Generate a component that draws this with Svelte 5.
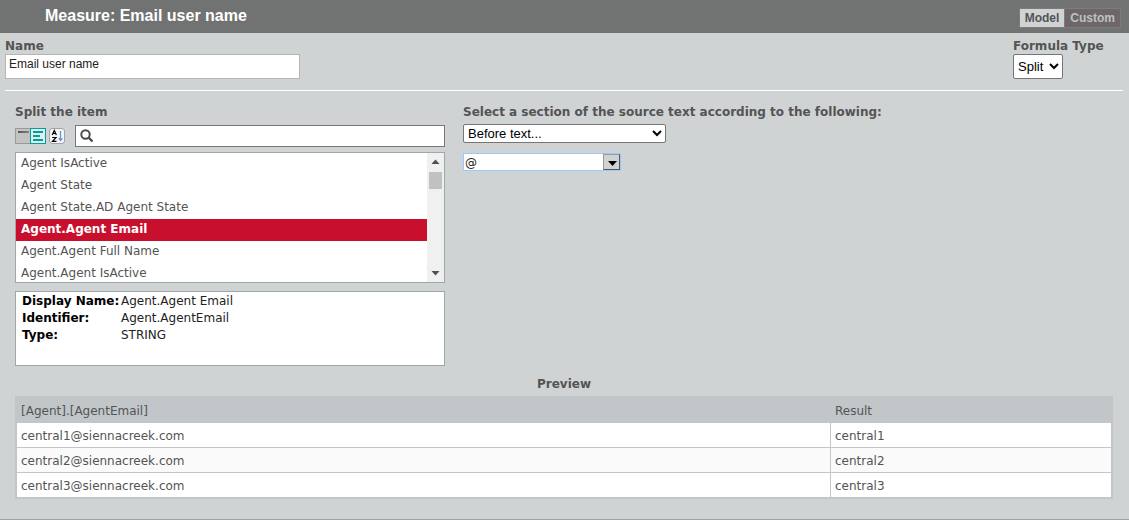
<script lang="ts">
	let mode = 'Model';
	let name = 'Email user name';
	let formulaType = 'Split';
	let search = '';
	let section = 'Before text...';
	let splitText = '@';
	let grouped = true;

	const items = [
		'Agent IsActive',
		'Agent State',
		'Agent State.AD Agent State',
		'Agent.Agent Email',
		'Agent.Agent Full Name',
		'Agent.Agent IsActive'
	];
	let selected = 'Agent.Agent Email';

	const emails = [
		'central1@siennacreek.com',
		'central2@siennacreek.com',
		'central3@siennacreek.com'
	];

	$: visible = items.filter((i) => i.toLowerCase().includes(search.toLowerCase()));

	function split(text: string, sep: string, how: string) {
		const at = text.indexOf(sep);
		if (!sep || at < 0) return text;
		return how === 'Before text...' ? text.slice(0, at) : text.slice(at + sep.length);
	}
</script>

<div class="page">
	<header>
		<h1>Measure: Email user name</h1>
		<div class="modes">
			{#each ['Model', 'Custom'] as m}
				<button class:active={mode === m} on:click={() => (mode = m)}>{m}</button>
			{/each}
		</div>
	</header>

	<div class="top">
		<div class="field">
			<label for="name">Name</label>
			<input id="name" class="name" type="text" bind:value={name} />
		</div>
		<div class="field type">
			<label for="type">Formula Type</label>
			<select id="type" bind:value={formulaType}>
				<option>Split</option>
				<option>Sum</option>
			</select>
		</div>
	</div>

	<main>
		<div class="columns">
			<section class="source">
				<h2>Split the item</h2>
				<div class="toolbar">
					<div class="views">
						<button aria-label="Flat view" class:on={!grouped} on:click={() => (grouped = false)}>
							<svg width="14" height="14" viewBox="0 0 14 14">
								<defs>
									<linearGradient id="bar">
										<stop offset="0" stop-color="#555" />
										<stop offset="1" stop-color="#808080" />
									</linearGradient>
								</defs>
								<rect x="2" y="2" width="11" height="2" fill="url(#bar)" />
							</svg>
						</button>
						<button aria-label="Grouped view" class:on={grouped} on:click={() => (grouped = true)}>
							<svg width="14" height="14" viewBox="0 0 14 14" fill="#00a19a">
								<rect x="2" y="2" width="10" height="2" />
								<rect x="2" y="6" width="7" height="2" />
								<rect x="2" y="10" width="10" height="2" />
							</svg>
						</button>
					</div>
					<button class="sort" aria-label="Sort A to Z">
						<svg width="16" height="16" viewBox="0 0 16 16" fill="none">
							<rect x="0.5" y="0.5" width="15" height="15" rx="2.5" fill="#f4f4f4" stroke="#a3a3a3" />
							<path d="M3.200 7 5.300 2.500 7.400 7M4 5.500h2.600" stroke="#000" stroke-width="1.200" />
							<path d="M3.200 9.500h3.800L3.500 13.300H7.500" stroke="#000" stroke-width="1.200" />
							<path d="M11.500 3v8" stroke="#5b8fe0" stroke-width="1.200" />
							<path d="M9 10.200h5l-2.500 3.300z" fill="#5b8fe0" />
						</svg>
					</button>
					<label class="search">
						<svg width="14" height="14" viewBox="0 0 14 14" fill="none" stroke="#4a4a4a">
							<circle cx="5.500" cy="5.500" r="4.200" stroke-width="2" />
							<path d="M8.500 8.500 12.500 12.500" stroke-width="2.400" />
						</svg>
						<input type="text" aria-label="Search" bind:value={search} />
					</label>
				</div>

				<div class="list">
					<ul>
						{#each visible as item}
							<li>
								<button class:selected={selected === item} on:click={() => (selected = item)}>{item}</button>
							</li>
						{/each}
					</ul>
					<div class="scroll">
						<svg width="9" height="5" viewBox="0 0 9 5"><path d="M0.500 5 4.500 0.500 8.500 5z" fill="#505050" /></svg>
						<div class="thumb"></div>
						<svg width="9" height="5" viewBox="0 0 9 5"><path d="M0.500 0 4.500 4.500 8.500 0z" fill="#505050" /></svg>
					</div>
				</div>

				<dl>
					<dt>Display Name:</dt>
					<dd>{selected}</dd>
					<dt>Identifier:</dt>
					<dd>{selected.replaceAll(' ', '')}</dd>
					<dt>Type:</dt>
					<dd>STRING</dd>
				</dl>
			</section>

			<section class="rule">
				<h2><label for="section">Select a section of the source text according to the following:</label></h2>
				<select id="section" bind:value={section}>
					<option>Before text...</option>
					<option>After text...</option>
				</select>
				<div class="combo">
					<input type="text" aria-label="Text" bind:value={splitText} />
					<button aria-label="Show suggestions">
						<svg width="9" height="5" viewBox="0 0 9 5"><path d="M0 0h9L4.500 5z" fill="#000" /></svg>
					</button>
				</div>
			</section>
		</div>

		<h2 class="preview">Preview</h2>
		<table>
			<thead>
				<tr>
					<th>[Agent].[AgentEmail]</th>
					<th class="result">Result</th>
				</tr>
			</thead>
			<tbody>
				{#each emails as email}
					<tr>
						<td>{email}</td>
						<td>{split(email, splitText, section)}</td>
					</tr>
				{/each}
			</tbody>
		</table>
	</main>
</div>

<style>
	:global(body) {
		margin: 0;
		background: #cfd3d4;
	}

	.page {
		box-sizing: border-box;
		min-height: 100vh;
		border-bottom: 1px solid #9ea4a6;
		font: 12px/16px "DejaVu Sans", sans-serif;
		color: #545454;
	}

	.page :is(input, select, button) {
		box-sizing: border-box;
		margin: 0;
		padding: 0;
		border-radius: 0;
	}

	.page header {
		display: flex;
		justify-content: space-between;
		height: 33px;
		padding: 0 8px 0 45px;
		background: #717372;
	}

	h1 {
		margin: 0;
		font: bold 16px/32px "Liberation Sans", Arial, sans-serif;
		color: #fff;
	}

	.modes {
		display: flex;
		padding-top: 8px;
	}

	.page .modes button {
		height: 20px;
		padding: 0 5px;
		border: 1px solid #857780;
		background: #6e6769;
		font: bold 12px/16px "Liberation Sans", Arial, sans-serif;
		color: #bfc0c1;
	}

	.page .modes button + button {
		border-left: 0;
	}

	.page .modes .active {
		background: #cfd3d4;
		color: #545454;
	}

	.top {
		display: flex;
		justify-content: space-between;
		margin: 0 6px 0 5px;
		padding: 5px 0 11px;
		border-bottom: 1px solid #fff;
	}

	.field {
		display: flex;
		flex-direction: column;
		align-items: flex-start;
	}

	.field.type {
		width: 110px;
	}

	label {
		font-weight: bold;
	}

	.page .name {
		width: 295px;
		height: 25px;
		padding: 0 3px 6px;
		border: 1px solid #b5b5b5;
		font: 12px/16px "Liberation Sans", Arial, sans-serif;
		color: #222;
	}

	.page select {
		border: 1px solid #767676;
		border-radius: 2px;
		background: #fff;
		font: 13px/16px "Liberation Sans", Arial, sans-serif;
		color: #000;
	}

	#type {
		width: 50px;
		height: 25px;
	}

	main {
		padding: 13px 16px 20px 15px;
	}

	.columns {
		display: flex;
		gap: 18px;
	}

	.source {
		width: 430px;
	}

	h2 {
		margin: 0;
		font-size: 12px;
		line-height: 16px;
	}

	.toolbar {
		display: flex;
		align-items: center;
		margin: 5px 0;
	}

	.views {
		display: flex;
	}

	.page .views button {
		width: 16px;
		height: 16px;
		border: 1px solid #999;
		background: #c3c3c3;
	}

	.page .views button:first-child {
		width: 15px;
		border-right: 0;
	}

	.page .views .on {
		border-color: #00a19a;
		background: #e0efee;
	}

	button svg {
		display: block;
	}

	.page .sort {
		margin: 0 10px 0 3px;
		border: 0;
		background: none;
	}

	.search {
		display: flex;
		flex: 1;
		align-items: center;
		box-sizing: border-box;
		height: 22px;
		padding-left: 4px;
		border: 1px solid #777;
		background: #fff;
	}

	.page .search input {
		flex: 1;
		margin-left: 4px;
		border: 0;
		outline: 0;
	}

	.list {
		display: flex;
		height: 129px;
		border: 1px solid #9ea7aa;
		background: #fff;
		overflow: hidden;
	}

	ul {
		flex: 1;
		margin: 0;
		padding: 0;
		list-style: none;
	}

	.page li button {
		display: block;
		width: 100%;
		height: 22px;
		padding: 0 5px 2px;
		border: 0;
		background: #fff;
		font: inherit;
		text-align: left;
		color: #545454;
	}

	.page li .selected {
		background: #c8102e;
		font-weight: bold;
		color: #fff;
	}

	.scroll {
		display: flex;
		flex-direction: column;
		align-items: center;
		box-sizing: border-box;
		width: 17px;
		padding: 6px 0;
		background: #f0f0f0;
	}

	.thumb {
		width: 13px;
		height: 17px;
		margin: 8px 0 auto;
		background: #c1c1c1;
	}

	dl {
		display: grid;
		grid-template-columns: 99px 1fr;
		grid-auto-rows: 17px;
		box-sizing: border-box;
		height: 75px;
		margin: 8px 0 0;
		padding: 1px 6px;
		border: 1px solid #9ea7aa;
		background: #fff;
		color: #222;
	}

	dt {
		font-weight: bold;
		white-space: nowrap;
		color: #000;
	}

	dd {
		margin: 0;
	}

	.rule {
		flex: 1;
	}

	#section {
		display: block;
		width: 203px;
		height: 19px;
		margin-top: 4px;
	}

	.combo {
		display: flex;
		box-sizing: border-box;
		width: 158px;
		height: 18px;
		margin-top: 10px;
		border: 1px solid #99c9ff;
		background: #fff;
	}

	.page .combo input {
		flex: 1;
		min-width: 0;
		padding: 1px 0 0 1px;
		border: 0;
		outline: 0;
		font: 12px/16px "DejaVu Sans", sans-serif;
		color: #222;
	}

	.page .combo button {
		display: flex;
		align-items: center;
		justify-content: center;
		width: 17px;
		padding: 2px 0 0 2px;
		border: 1px solid #555;
		border-top-color: #999;
		border-left-color: #999;
		background: #cfd3d4;
	}

	.preview {
		margin: 10px 0 4px;
		text-align: center;
	}

	table {
		width: 100%;
		border: 2px solid #c1c6c8;
		border-spacing: 0;
		background: #fff;
	}

	th,
	td {
		box-sizing: border-box;
		height: 25px;
		padding: 1px 4px 0;
		font-weight: normal;
		text-align: left;
	}

	th {
		background: #c1c6c8;
	}

	.result {
		width: 281px;
		padding-left: 5px;
	}

	td {
		padding-top: 2px;
		border-bottom: 1px solid #c1c6c8;
	}

	td + td {
		border-left: 1px solid #c1c6c8;
	}

	tr:nth-child(even) td {
		background: #fafafa;
	}

	tr:last-child td {
		height: 24px;
		border-bottom: 0;
	}
</style>
